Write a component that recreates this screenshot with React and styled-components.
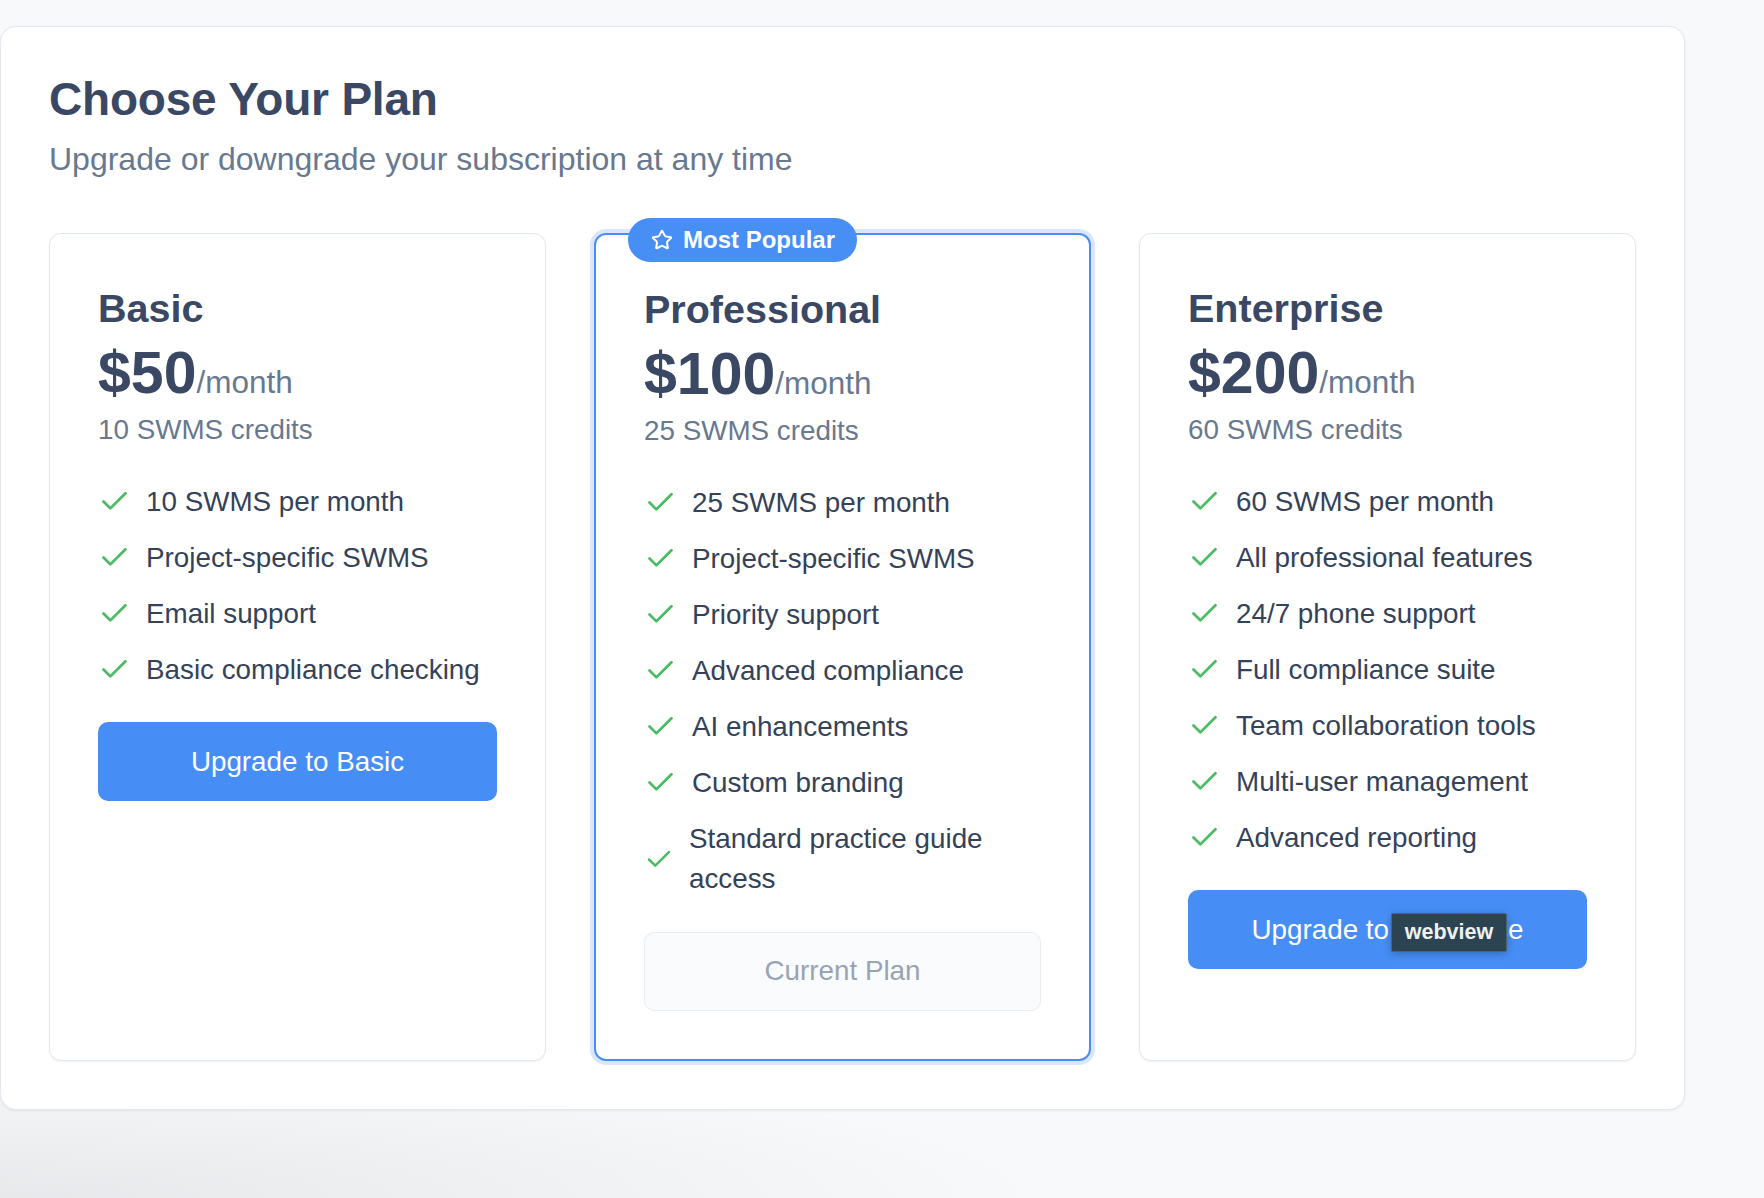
import React from 'react';
import styled, { createGlobalStyle, css } from 'styled-components';
import { Check, Star } from 'lucide-react';

const GlobalStyle = createGlobalStyle`
  html, body {
    margin: 0;
    padding: 0;
  }
  body {
    font-family: "Liberation Sans", Arial, Helvetica, sans-serif;
    background:
      radial-gradient(ellipse 1050px 140px at 0 100%, rgba(60, 64, 72, 0.09), rgba(60, 64, 72, 0) 100%),
      #f8f9fb;
    min-height: 1198px;
  }
`;

const Page = styled.div`
  min-height: 1198px;
  padding-top: 26px;
  box-sizing: border-box;
`;

const Panel = styled.section`
  width: 1685px;
  box-sizing: border-box;
  background: #fff;
  border: 1.5px solid #e3e8ee;
  border-radius: 16px;
  padding: 45px 48px 48px 48px;
  box-shadow: 0 1px 3px rgba(15, 23, 42, 0.07);
`;

const Title = styled.h2`
  margin: 0;
  font-size: 46px;
  line-height: 55px;
  font-weight: 700;
  letter-spacing: -0.2px;
  color: #3a4864;
`;

const Subtitle = styled.p`
  margin: 7.5px 0 0 0;
  font-size: 32px;
  line-height: 48px;
  color: #68788f;
`;

const PlansGrid = styled.div`
  display: grid;
  grid-template-columns: repeat(3, 1fr);
  gap: 48px;
  margin-top: 50px;
`;

const Card = styled.div`
  position: relative;
  display: flex;
  flex-direction: column;
  background: #fff;
  border: 1.5px solid #e2e8f0;
  border-radius: 12px;
  padding: 48.5px 48px 48px 48px;
  box-shadow: 0 1px 2px rgba(15, 23, 42, 0.06);

  ${(p) =>
    p.$featured &&
    css`
      border: 2px solid #4a8ef5;
      box-shadow: 0 0 0 4px #d9e6fc;
    `}
`;

const Badge = styled.div`
  position: absolute;
  top: -17px;
  left: 32px;
  height: 44px;
  display: flex;
  align-items: center;
  gap: 10px;
  padding: 0 22px 0 23px;
  border-radius: 999px;
  background: #478ef5;
  color: #fff;
  font-size: 24px;
  font-weight: 700;
  white-space: nowrap;
`;

const PlanName = styled.h3`
  margin: 0 0 10px 0;
  font-size: 39.5px;
  line-height: 52px;
  font-weight: 700;
  color: #3a4864;
`;

const PriceRow = styled.div`
  display: flex;
  align-items: baseline;
  height: 58px;
`;

const Amount = styled.span`
  font-size: 59px;
  line-height: 58px;
  font-weight: 700;
  color: #3a4864;
`;

const Period = styled.span`
  font-size: 31.5px;
  line-height: 31px;
  color: #68788f;
`;

const Credits = styled.div`
  margin-top: 7px;
  font-size: 27.8px;
  line-height: 41px;
  color: #68788f;
`;

const FeatureList = styled.ul`
  list-style: none;
  margin: 31.5px 0 32px 0;
  padding: 0;
  display: flex;
  flex-direction: column;
  gap: 15.5px;
`;

const Feature = styled.li`
  display: flex;
  align-items: center;
  gap: 15px;
  font-size: 27.8px;
  line-height: 40.5px;
  color: #344259;

  svg {
    color: #4cba62;
    flex-shrink: 1;
  }
`;

const PlanButton = styled.button`
  position: relative;
  width: 100%;
  height: 79px;
  border-radius: 10px;
  font-family: inherit;
  font-size: 27.8px;
  cursor: pointer;
  border: 1.5px solid transparent;
  background: #468ef6;
  color: #fff;

  ${(p) =>
    p.$current &&
    css`
      background: #fafbfd;
      border-color: #e9edf2;
      color: #98a3b4;
      cursor: default;
    `}
`;

const Tooltip = styled.span`
  position: absolute;
  left: 202px;
  top: 22px;
  height: 39px;
  width: 116px;
  box-sizing: border-box;
  display: flex;
  align-items: center;
  justify-content: center;
  background: #2c4352;
  border: 1px solid #4b6473;
  border-radius: 2px;
  color: #eef1f3;
  font-size: 21.5px;
  font-weight: 700;
  box-shadow: 0 2px 8px rgba(0, 0, 0, 0.25);
`;

const plans = [
  {
    name: 'Basic',
    price: '$50',
    credits: '10 SWMS credits',
    features: ['10 SWMS per month', 'Project-specific SWMS', 'Email support', 'Basic compliance checking'],
    action: 'Upgrade to Basic',
  },
  {
    name: 'Professional',
    price: '$100',
    credits: '25 SWMS credits',
    featured: true,
    current: true,
    features: [
      '25 SWMS per month',
      'Project-specific SWMS',
      'Priority support',
      'Advanced compliance',
      'AI enhancements',
      'Custom branding',
      'Standard practice guide access',
    ],
    action: 'Current Plan',
  },
  {
    name: 'Enterprise',
    price: '$200',
    credits: '60 SWMS credits',
    features: [
      '60 SWMS per month',
      'All professional features',
      '24/7 phone support',
      'Full compliance suite',
      'Team collaboration tools',
      'Multi-user management',
      'Advanced reporting',
    ],
    action: 'Upgrade to Enterprise',
    tooltip: 'webview',
  },
];

const App = () => {
  return (
    <>
      <GlobalStyle />
      <Page>
        <Panel>
          <Title>Choose Your Plan</Title>
          <Subtitle>Upgrade or downgrade your subscription at any time</Subtitle>
          <PlansGrid>
            {plans.map((plan) => (
              <Card key={plan.name} $featured={plan.featured}>
                {plan.featured && (
                  <Badge>
                    <Star size={22} strokeWidth={2.2} />
                    Most Popular
                  </Badge>
                )}
                <PlanName>{plan.name}</PlanName>
                <PriceRow>
                  <Amount>{plan.price}</Amount>
                  <Period>/month</Period>
                </PriceRow>
                <Credits>{plan.credits}</Credits>
                <FeatureList>
                  {plan.features.map((f) => (
                    <Feature key={f}>
                      <Check size={33} strokeWidth={2} />
                      <span>{f}</span>
                    </Feature>
                  ))}
                </FeatureList>
                <PlanButton $current={plan.current} disabled={plan.current}>
                  {plan.action}
                  {plan.tooltip && <Tooltip>{plan.tooltip}</Tooltip>}
                </PlanButton>
              </Card>
            ))}
          </PlansGrid>
        </Panel>
      </Page>
    </>
  );
};

export default App;
